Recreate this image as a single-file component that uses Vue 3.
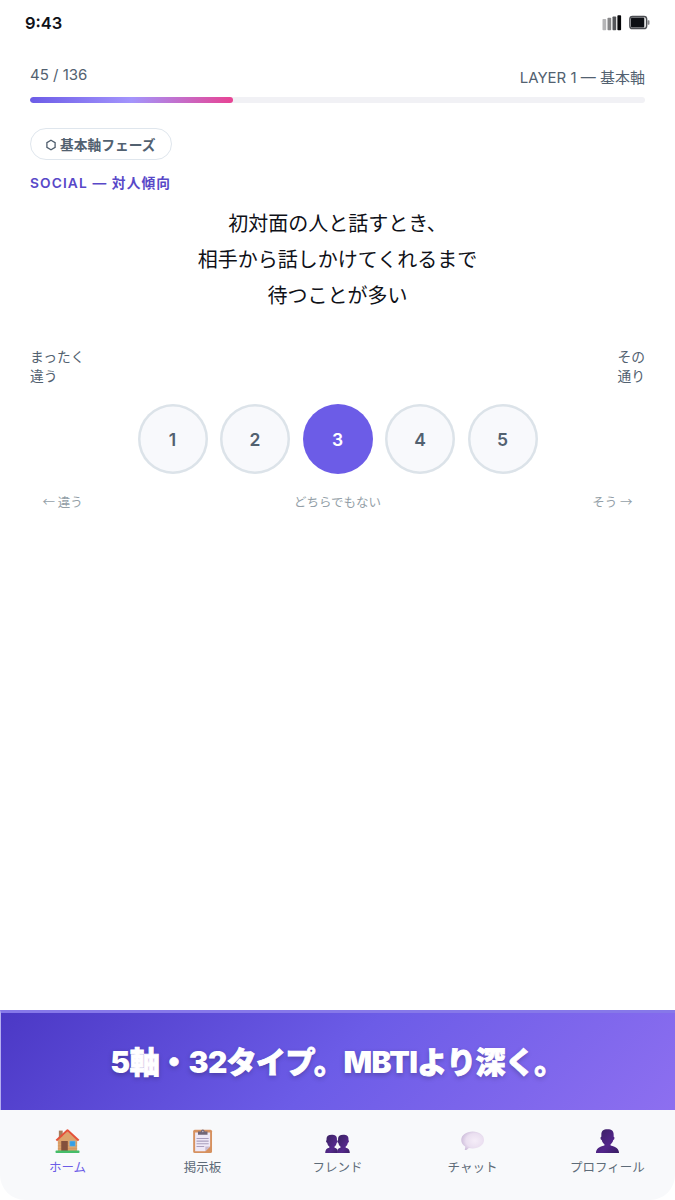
<script setup>
import { ref, computed } from 'vue'

const current = 45
const total = 136
const selected = ref(3)
const activeTab = ref('home')

const progress = computed(() => `${(current / total) * 100}%`)

const question = [
  '初対面の人と話すとき、',
  '相手から話しかけてくれるまで',
  '待つことが多い'
]

const tabs = [
  { id: 'home', label: 'ホーム' },
  { id: 'board', label: '掲示板' },
  { id: 'friends', label: 'フレンド' },
  { id: 'chat', label: 'チャット' },
  { id: 'profile', label: 'プロフィール' }
]
</script>

<template>
  <div class="screen">
    <header class="status-bar">
      <span class="time">9:43</span>
      <div class="status-icons">
        <svg width="20" height="16" viewBox="0 0 20 16">
          <rect x="0.5" y="4" width="3.7" height="11.2" rx="0.8" fill="#b5b5b7" />
          <rect x="5.5" y="2.7" width="3.7" height="12.5" rx="0.8" fill="#858587" />
          <rect x="10.5" y="1.5" width="3.7" height="13.7" rx="0.8" fill="#55565a" />
          <rect x="15.4" y="0.2" width="3.7" height="15" rx="0.8" fill="#050508" />
        </svg>
        <svg width="22" height="16" viewBox="0 0 22 16">
          <rect x="0.9" y="1.5" width="16.7" height="12" rx="2.6" fill="#fff" stroke="#4c4e53" stroke-width="1.5" />
          <rect x="2" y="2.6" width="13.3" height="9.8" rx="1" fill="#0d0f14" />
          <rect x="18.5" y="5.3" width="2" height="4.4" rx="0.7" fill="#85868a" />
        </svg>
      </div>
    </header>

    <main class="content">
      <div class="progress-head">
        <span class="count">{{ current }} / {{ total }}</span>
        <span class="layer">LAYER 1 — 基本軸</span>
      </div>
      <div class="progress-track">
        <div class="progress-fill" :style="{ width: progress }"></div>
      </div>

      <div class="phase">
        <svg width="10" height="12" viewBox="0 0 10 12">
          <path d="M5 1.2 9.1 3.6V8.4L5 10.8.9 8.4V3.6Z" fill="none" stroke="#4f5e6d" stroke-width="1.3" />
        </svg>
        <span>基本軸フェーズ</span>
      </div>
      <div class="category">SOCIAL — 対人傾向</div>

      <h1 class="question">
        <span v-for="line in question" :key="line">{{ line }}</span>
      </h1>

      <div class="ends">
        <span>まったく<br>違う</span>
        <span>その<br>通り</span>
      </div>
      <div class="scale">
        <button
          v-for="n in 5"
          :key="n"
          class="choice"
          :class="{ selected: selected === n }"
          @click="selected = n"
        >{{ n }}</button>
      </div>
      <div class="hints">
        <span>← 違う</span>
        <span>どちらでもない</span>
        <span>そう →</span>
      </div>
    </main>

    <section class="banner">
      <p>5<b>軸・</b>32<b>タイプ。</b>MBTI<b>より深く。</b></p>
    </section>

    <nav class="tabs">
      <a
        v-for="tab in tabs"
        :key="tab.id"
        class="tab"
        :class="{ active: activeTab === tab.id }"
        @click="activeTab = tab.id"
      >
        <svg v-if="tab.id === 'home'" width="25" height="26" viewBox="0 0 26 26">
          <path d="M4 2.2h4v7H4z" fill="#a87c5c" />
          <path d="M3 12 13 3l10 9v12H3z" fill="#dda36b" />
          <path d="M3 15h20M3 18h20M3 21h20" stroke="#c98d59" stroke-width=".5" />
          <path d="M1.4 12.5 13 1.9l11.6 10.6" fill="none" stroke="#e4533a" stroke-width="2.2" stroke-linejoin="round" />
          <rect x="6.5" y="13" width="6.8" height="10.5" fill="#84503c" />
          <rect x="15.4" y="13" width="5.6" height="5.4" fill="#349fe8" stroke="#96b6c8" stroke-width=".6" />
          <rect x=".5" y="23" width="25" height="2.4" rx=".8" fill="#45bd69" />
        </svg>
        <svg v-else-if="tab.id === 'board'" width="25" height="26" viewBox="0 0 26 26">
          <rect x="3.3" y="1.2" width="19.6" height="24.3" rx="1.6" fill="#d6915f" />
          <path d="M5.3 4.2h15.6v14.6l-5 4.8H5.3z" fill="#eee8f6" />
          <path d="M20.9 18.8h-5v4.8z" fill="#c7bad1" />
          <path d="M8.3 3h3.1a1.9 1.9 0 0 1 3.8 0h3v3.5H8.3z" fill="#716777" />
          <circle cx="13.3" cy="3.1" r=".8" fill="#c6b8c4" />
          <path d="M6.8 10.3h12.6M6.8 13.1h12.6M6.8 15.9h12.6M6.8 18.7h8" stroke="#a99ebd" stroke-width="1.1" />
        </svg>
        <svg v-else-if="tab.id === 'friends'" width="25" height="26" viewBox="0 0 26 26">
          <defs>
            <linearGradient id="pair" x2="1" y2="1">
              <stop stop-color="#37215d" /><stop offset=".65" stop-color="#55298c" /><stop offset="1" stop-color="#3b2065" />
            </linearGradient>
          </defs>
          <g fill="url(#pair)">
            <path d="M1.6 10.7c0-3.2 1.9-4.3 5.4-4.3s5.4 1.1 5.4 4.300v1.600c1 0 .9 2.500-.3 2.700-.4 1.700-1.200 3-2.200 3.800v1.100c2.500.5 3.600 2 3.600 5.600H.2c0-3.600 1.600-5.100 4.300-5.600v-1.100c-1-.8-1.800-2.100-2.200-3.800-1.400-.2-1.600-2.700-.7-2.700z" />
            <path d="M13.600 10.700c0-3.200 1.900-4.300 5.400-4.300s5.400 1.100 5.400 4.300v1.600c.9 0 .7 2.500-.7 2.700-.4 1.700-1.200 3-2.200 3.800v1.100c2.700.5 4.300 2 4.300 5.600H12.500c0-3.600 1.100-5.100 3.600-5.600v-1.100c-1-.8-1.800-2.100-2.200-3.800-1.200-.2-1.300-2.700-.3-2.700z" />
          </g>
        </svg>
        <svg v-else-if="tab.id === 'chat'" width="25" height="26" viewBox="0 0 26 26">
          <defs>
            <radialGradient id="bubble" cx=".6" cy=".5" r=".6">
              <stop stop-color="#f5edf8" /><stop offset=".65" stop-color="#eadff0" /><stop offset="1" stop-color="#cfbfdc" />
            </radialGradient>
          </defs>
          <path d="M13.2 3.1c6.7 0 11.8 3.7 11.8 8.8s-5.1 8.8-11.8 8.8c-1.4 0-2.800-.2-4-.5-1 1.300-2.400 2-3.800 2.200-.5 0-.6-.4-.4-.8.5-1 .6-1.900.4-2.900C2.900 17.100 1.300 14.700 1.300 11.900c0-5.100 5.200-8.800 11.900-8.800z" fill="url(#bubble)" />
        </svg>
        <svg v-else width="25" height="26" viewBox="0 0 26 26">
          <defs>
            <linearGradient id="person" x2="1" y2="1">
              <stop stop-color="#38205f" /><stop offset=".6" stop-color="#53258b" /><stop offset="1" stop-color="#371d61" />
            </linearGradient>
          </defs>
          <path d="M6.6 6.6C6.600 2.400 8.500.9 13 .9s6.400 1.500 6.400 5.700v1.900c1.300 0 1.100 3.100-.4 3.400-.5 2.100-1.500 3.600-2.800 4.500v1.300c5.200 1.100 8.800 3.500 8.800 7.800H1c0-4.300 3.600-6.700 8.800-7.800v-1.300c-1.300-.9-2.300-2.400-2.800-4.500-1.500-.3-1.700-3.400-.4-3.400z" fill="url(#person)" />
        </svg>
        <span>{{ tab.label }}</span>
      </a>
    </nav>
  </div>
</template>

<style>
body {
  margin: 0;
  background: #fff;
}
</style>

<style scoped>
.screen {
  display: flex;
  flex-direction: column;
  width: 675px;
  height: 1200px;
  overflow: hidden;
  background: #fff;
  color: #0f1118;
  font-family: Inter, "Noto Sans CJK JP", sans-serif;
}

.status-bar {
  display: flex;
  align-items: center;
  justify-content: space-between;
  box-sizing: border-box;
  height: 45px;
  padding: 0 24px 0 25px;
}

.time {
  font-size: 16.5px;
  font-weight: 600;
}

.status-icons {
  display: flex;
  gap: 7px;
}

.content {
  flex: 1;
  padding: 20px 30px 0;
}

.progress-head {
  display: flex;
  justify-content: space-between;
  height: 32px;
  color: #526170;
  font-size: 15px;
  line-height: 20px;
}

.layer {
  padding-top: 3px;
}

.progress-track {
  height: 6px;
  overflow: hidden;
  border-radius: 3px;
  background: #f1f1f5;
}

.progress-fill {
  height: 100%;
  border-radius: 3px;
  background: linear-gradient(90deg, #6c5ce7, #a394fc 50%, #e84393);
}

.phase {
  display: flex;
  align-items: center;
  gap: 4px;
  box-sizing: border-box;
  width: 142px;
  height: 32px;
  margin-top: 25px;
  padding: 2px 0 0 15px;
  border: 1px solid #dfe6ed;
  border-radius: 16px;
  color: #526170;
  font-size: 13.75px;
  font-weight: 600;
  line-height: 20px;
  white-space: nowrap;
}

.category {
  margin-top: 13px;
  color: #5848c8;
  font-size: 13.75px;
  font-weight: 600;
  line-height: 20px;
  letter-spacing: 1.1px;
}

.question {
  display: flex;
  flex-direction: column;
  margin: 13px 0 0;
  font-size: 20px;
  font-weight: 400;
  line-height: 36px;
  text-align: center;
}

.ends {
  display: flex;
  justify-content: space-between;
  margin-top: 34px;
  color: #526170;
  font-size: 13.75px;
  line-height: 19.25px;
}

.scale {
  display: flex;
  justify-content: center;
  gap: 12.5px;
  margin-top: 17px;
}

.choice {
  width: 70px;
  height: 70px;
  padding: 0;
  border: 0;
  border-radius: 50%;
  background: #f8f9fc;
  box-shadow: inset 0 0 0 2.5px #dce3e9;
  color: #526170;
  font-family: inherit;
  font-size: 17.5px;
  font-weight: 600;
  line-height: 72px;
}

.choice.selected {
  background: #6c5ce7;
  box-shadow: none;
  color: #fff;
}

.hints {
  display: flex;
  justify-content: space-between;
  margin-top: 18px;
  padding: 0 12.5px;
  color: #949fa8;
  font-family: "Noto Sans CJK JP", sans-serif;
  font-size: 12.5px;
  line-height: 20px;
}

.banner {
  display: flex;
  align-items: center;
  justify-content: center;
  box-sizing: border-box;
  height: 100px;
  padding: 0 2px 3px 0;
  border-top: 3px solid #8678e9;
  border-left: 1px solid #b4adf0;
  background: linear-gradient(135deg, #4b38c5, #6c5ce7 50%, #8d6ff0) border-box;
}

.banner p {
  margin: 0;
  color: #fff;
  font-size: 30px;
  font-weight: 900;
  letter-spacing: -0.6px;
  white-space: nowrap;
  text-shadow: 0 2px 5px rgba(0, 0, 0, 0.25);
}

.banner b {
  font-weight: 900;
  -webkit-text-stroke: 0.9px #fff;
}

.tabs {
  display: grid;
  grid-template-columns: repeat(5, 1fr);
  height: 90px;
  border-radius: 0 0 25px 25px;
  background: #f8f9fb;
}

.tab {
  display: flex;
  flex-direction: column;
  align-items: center;
  padding-top: 18px;
  color: #5d6b78;
  font-size: 12.5px;
  line-height: 20px;
  cursor: pointer;
}

.tab span {
  margin-top: 4px;
}

.tab.active {
  color: #6c5ce7;
}
</style>
